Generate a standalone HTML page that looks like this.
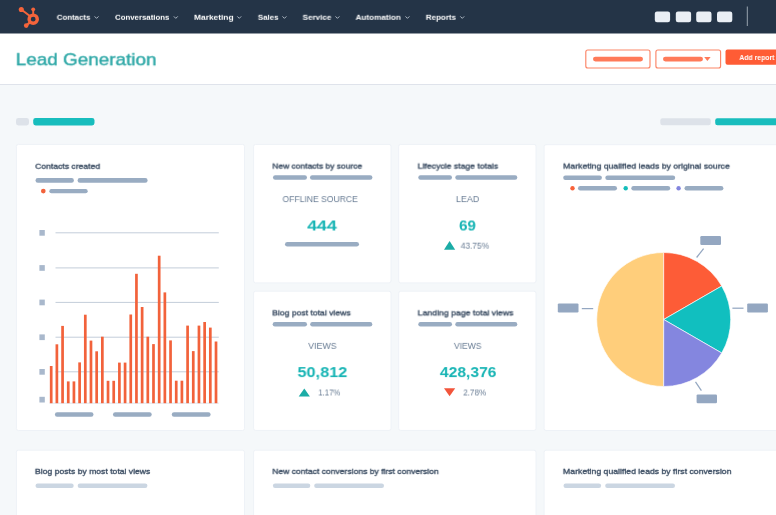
<!DOCTYPE html>
<html lang="en"><head><meta charset="utf-8"><title>Lead Generation</title>
<style>
html,body{margin:0;padding:0}
body{width:776px;height:515px;overflow:hidden;position:relative;background:#f5f8fa;font-family:"Liberation Sans",Arial,sans-serif}
.c{position:absolute;box-sizing:border-box;background:#fff;border:1px solid #eef2f7;border-radius:2px}
.t{position:absolute;left:0;white-space:nowrap;margin:0;padding:0;transform-origin:0 50%;will-change:transform}
#g{position:absolute;left:0;top:0}
</style></head><body>
<div style="position:absolute;left:0;top:0;width:776px;height:33px;background:#243447"></div>
<div style="position:absolute;left:0;top:33px;width:776px;height:51px;background:#fff;border-bottom:1px solid #dfe3eb"></div>
<svg id="g" width="776" height="515" viewBox="0 0 776 515">
<g fill="#f4643b" stroke="#f4643b" stroke-linecap="round">
<circle cx="21.3" cy="9.45" r="2.55" stroke="none"/>
<line x1="21.3" y1="9.45" x2="29.5" y2="15.7" stroke-width="2"/>
<circle cx="33.2" cy="9.3" r="1.9" stroke="none"/>
<line x1="33.2" y1="9.3" x2="33.2" y2="14" stroke-width="1.9"/>
<circle cx="33.2" cy="19.2" r="4.1" fill="none" stroke-width="3.4"/>
<circle cx="26.2" cy="25.6" r="2.3" stroke="none"/>
<line x1="26.2" y1="25.6" x2="29.6" y2="22.6" stroke-width="2.3"/>
</g>
<path d="M94.60 16.4 l1.95 1.95 l1.95 -1.95" fill="none" stroke="#bcc6d1" stroke-width="0.9"/>
<path d="M173.85 16.4 l1.95 1.95 l1.95 -1.95" fill="none" stroke="#bcc6d1" stroke-width="0.9"/>
<path d="M237.30 16.4 l1.95 1.95 l1.95 -1.95" fill="none" stroke="#bcc6d1" stroke-width="0.9"/>
<path d="M282.50 16.4 l1.95 1.95 l1.95 -1.95" fill="none" stroke="#bcc6d1" stroke-width="0.9"/>
<path d="M335.50 16.4 l1.95 1.95 l1.95 -1.95" fill="none" stroke="#bcc6d1" stroke-width="0.9"/>
<path d="M405.50 16.4 l1.95 1.95 l1.95 -1.95" fill="none" stroke="#bcc6d1" stroke-width="0.9"/>
<path d="M460.30 16.4 l1.95 1.95 l1.95 -1.95" fill="none" stroke="#bcc6d1" stroke-width="0.9"/>
<rect x="654.80" y="11.60" width="15.30" height="10.60" rx="2.20" fill="#eaeff5"/>
<rect x="675.80" y="11.60" width="15.30" height="10.60" rx="2.20" fill="#eaeff5"/>
<rect x="696.20" y="11.60" width="15.30" height="10.60" rx="2.20" fill="#eaeff5"/>
<rect x="717.00" y="11.60" width="15.30" height="10.60" rx="2.20" fill="#eaeff5"/>
<rect x="746.80" y="6.50" width="1.00" height="19.50" rx="0.00" fill="#98a3af"/>
<rect x="0.00" y="33.00" width="776.00" height="0.50" rx="0.00" fill="#243447"/>
<rect x="585.80" y="50.00" width="64.20" height="18.00" rx="2" fill="#fff" stroke="#fb8567" stroke-width="1.15"/>
<rect x="593.00" y="56.70" width="50.00" height="4.80" rx="2.40" fill="#ff7a59"/>
<rect x="655.90" y="50.00" width="64.70" height="18.00" rx="2" fill="#fff" stroke="#fb8567" stroke-width="1.15"/>
<rect x="663.00" y="56.70" width="40.00" height="4.80" rx="2.40" fill="#ff7a59"/>
<path d="M704.2 57.1 h6.4 l-3.2 3.8 Z" fill="#ff7a59"/>
<rect x="725.50" y="49.50" width="60.00" height="15.20" rx="2.00" fill="#ff5c35"/>
<rect x="16.00" y="118.00" width="13.00" height="7.50" rx="2.40" fill="#dde2e9"/>
<rect x="33.20" y="118.00" width="61.30" height="7.50" rx="2.40" fill="#18bdbd"/>
<rect x="660.30" y="118.30" width="50.50" height="7.00" rx="2.20" fill="#dde2e9"/>
<rect x="715.20" y="118.30" width="70.00" height="7.00" rx="2.20" fill="#18bdbd"/>
<rect x="16.40" y="144.40" width="228.10" height="286.10" rx="2" fill="#fff" stroke="#eef2f7" stroke-width="1"/>
<rect x="35.50" y="178.10" width="38.40" height="4.60" rx="2.30" fill="#99acc2"/>
<rect x="77.60" y="178.10" width="70.00" height="4.60" rx="2.30" fill="#99acc2"/>
<circle cx="43.3" cy="191.1" r="2.35" fill="#f2623b"/>
<rect x="49.30" y="189.00" width="38.40" height="4.30" rx="2.15" fill="#99acc2"/>
<rect x="39.40" y="230.00" width="5.40" height="5.70" rx="0.00" fill="#a9b8cc"/>
<rect x="55.50" y="232.30" width="163.30" height="1.00" rx="0.00" fill="#c4ceda"/>
<rect x="39.40" y="265.10" width="5.40" height="5.70" rx="0.00" fill="#a9b8cc"/>
<rect x="55.50" y="267.40" width="163.30" height="1.00" rx="0.00" fill="#c4ceda"/>
<rect x="39.40" y="299.60" width="5.40" height="5.70" rx="0.00" fill="#a9b8cc"/>
<rect x="55.50" y="301.90" width="163.30" height="1.00" rx="0.00" fill="#c4ceda"/>
<rect x="39.40" y="334.40" width="5.40" height="5.70" rx="0.00" fill="#a9b8cc"/>
<rect x="55.50" y="336.70" width="163.30" height="1.00" rx="0.00" fill="#c4ceda"/>
<rect x="39.40" y="369.00" width="5.40" height="5.70" rx="0.00" fill="#a9b8cc"/>
<rect x="55.50" y="371.30" width="163.30" height="1.00" rx="0.00" fill="#c4ceda"/>
<rect x="39.40" y="396.80" width="5.40" height="5.70" rx="0.00" fill="#a9b8cc"/>
<rect x="49.50" y="402.70" width="169.30" height="0.90" rx="0.00" fill="#dbe2ea"/>
<rect x="49.85" y="366.00" width="2.7" height="37.20" fill="#f2623b"/>
<rect x="55.53" y="344.30" width="2.7" height="58.90" fill="#f2623b"/>
<rect x="61.22" y="325.90" width="2.7" height="77.30" fill="#f2623b"/>
<rect x="66.90" y="381.40" width="2.7" height="21.80" fill="#f2623b"/>
<rect x="72.58" y="381.40" width="2.7" height="21.80" fill="#f2623b"/>
<rect x="78.27" y="362.40" width="2.7" height="40.80" fill="#f2623b"/>
<rect x="83.95" y="314.70" width="2.7" height="88.50" fill="#f2623b"/>
<rect x="89.63" y="340.60" width="2.7" height="62.60" fill="#f2623b"/>
<rect x="95.31" y="351.30" width="2.7" height="51.90" fill="#f2623b"/>
<rect x="101.00" y="336.70" width="2.7" height="66.50" fill="#f2623b"/>
<rect x="106.68" y="380.80" width="2.7" height="22.40" fill="#f2623b"/>
<rect x="112.36" y="380.80" width="2.7" height="22.40" fill="#f2623b"/>
<rect x="118.05" y="362.60" width="2.7" height="40.60" fill="#f2623b"/>
<rect x="123.73" y="362.60" width="2.7" height="40.60" fill="#f2623b"/>
<rect x="129.41" y="314.50" width="2.7" height="88.70" fill="#f2623b"/>
<rect x="135.09" y="273.80" width="2.7" height="129.40" fill="#f2623b"/>
<rect x="140.78" y="307.00" width="2.7" height="96.20" fill="#f2623b"/>
<rect x="146.46" y="336.70" width="2.7" height="66.50" fill="#f2623b"/>
<rect x="152.14" y="344.10" width="2.7" height="59.10" fill="#f2623b"/>
<rect x="157.83" y="255.70" width="2.7" height="147.50" fill="#f2623b"/>
<rect x="163.51" y="292.40" width="2.7" height="110.80" fill="#f2623b"/>
<rect x="169.19" y="340.40" width="2.7" height="62.80" fill="#f2623b"/>
<rect x="174.88" y="380.70" width="2.7" height="22.50" fill="#f2623b"/>
<rect x="180.56" y="380.70" width="2.7" height="22.50" fill="#f2623b"/>
<rect x="186.24" y="325.60" width="2.7" height="77.60" fill="#f2623b"/>
<rect x="191.92" y="351.10" width="2.7" height="52.10" fill="#f2623b"/>
<rect x="197.61" y="325.60" width="2.7" height="77.60" fill="#f2623b"/>
<rect x="203.29" y="322.00" width="2.7" height="81.20" fill="#f2623b"/>
<rect x="208.97" y="327.60" width="2.7" height="75.60" fill="#f2623b"/>
<rect x="214.66" y="341.50" width="2.7" height="61.70" fill="#f2623b"/>
<rect x="54.90" y="412.30" width="38.60" height="4.40" rx="2.20" fill="#99acc2"/>
<rect x="113.00" y="412.30" width="38.70" height="4.40" rx="2.20" fill="#99acc2"/>
<rect x="171.80" y="412.30" width="38.80" height="4.40" rx="2.20" fill="#99acc2"/>
<rect x="253.60" y="144.40" width="137.40" height="138.50" rx="2" fill="#fff" stroke="#eef2f7" stroke-width="1"/>
<rect x="273.00" y="175.30" width="34.00" height="4.40" rx="2.20" fill="#99acc2"/>
<rect x="310.00" y="175.30" width="62.40" height="4.40" rx="2.20" fill="#99acc2"/>
<rect x="285.00" y="241.90" width="74.00" height="4.70" rx="2.35" fill="#99acc2"/>
<rect x="398.70" y="144.40" width="137.30" height="138.50" rx="2" fill="#fff" stroke="#eef2f7" stroke-width="1"/>
<rect x="418.30" y="175.30" width="33.70" height="4.40" rx="2.20" fill="#99acc2"/>
<rect x="455.30" y="175.30" width="62.00" height="4.40" rx="2.20" fill="#99acc2"/>
<path d="M449.60 240.90 l5.6 8.8 h-11.2 Z" fill="#1baca6"/>
<rect x="253.60" y="291.20" width="137.40" height="139.20" rx="2" fill="#fff" stroke="#eef2f7" stroke-width="1"/>
<rect x="272.70" y="322.10" width="34.30" height="4.40" rx="2.20" fill="#99acc2"/>
<rect x="310.20" y="322.10" width="62.10" height="4.40" rx="2.20" fill="#99acc2"/>
<path d="M304.30 388.50 l5.6 8.0 h-11.2 Z" fill="#1baca6"/>
<rect x="398.70" y="291.20" width="137.30" height="139.20" rx="2" fill="#fff" stroke="#eef2f7" stroke-width="1"/>
<rect x="418.30" y="322.10" width="33.70" height="4.40" rx="2.20" fill="#99acc2"/>
<rect x="455.30" y="322.10" width="62.00" height="4.40" rx="2.20" fill="#99acc2"/>
<path d="M444.00 388.20 h11.2 l-5.6 8.0 Z" fill="#f2553b"/>
<rect x="544.10" y="144.70" width="245.80" height="285.80" rx="2" fill="#fff" stroke="#eef2f7" stroke-width="1"/>
<rect x="563.20" y="175.60" width="38.70" height="4.50" rx="2.25" fill="#99acc2"/>
<rect x="605.30" y="175.60" width="69.90" height="4.50" rx="2.25" fill="#99acc2"/>
<circle cx="572.5" cy="188.2" r="2.2" fill="#f8623a"/>
<rect x="578.00" y="186.00" width="39.00" height="4.50" rx="2.25" fill="#99acc2"/>
<circle cx="625.7" cy="188.2" r="2.2" fill="#14bdba"/>
<rect x="631.30" y="186.00" width="38.90" height="4.50" rx="2.25" fill="#99acc2"/>
<circle cx="678.6" cy="188.2" r="2.2" fill="#8385de"/>
<rect x="684.50" y="186.00" width="38.90" height="4.50" rx="2.25" fill="#99acc2"/>
<path d="M663.7 252.5 A67.0 67.0 0 0 0 663.7 386.5 Z" fill="#ffce7b" stroke="#fff" stroke-width="0.65"/>
<path d="M663.7 319.5 L663.70 252.50 A67.0 67.0 0 0 1 721.72 286.00 Z" fill="#fd5c37" stroke="#fff" stroke-width="0.65" stroke-linejoin="round"/>
<path d="M663.7 319.5 L721.72 286.00 A67.0 67.0 0 0 1 721.72 353.00 Z" fill="#11bfbf" stroke="#fff" stroke-width="0.65" stroke-linejoin="round"/>
<path d="M663.7 319.5 L721.72 353.00 A67.0 67.0 0 0 1 663.70 386.50 Z" fill="#8486df" stroke="#fff" stroke-width="0.65" stroke-linejoin="round"/>
<line x1="696.6" y1="257.5" x2="703.6" y2="248.6" stroke="#94a7c1" stroke-width="1.25"/>
<line x1="732.4" y1="308.2" x2="743.5" y2="308.2" stroke="#94a7c1" stroke-width="1.25"/>
<line x1="581.8" y1="308.6" x2="593.2" y2="308.6" stroke="#94a7c1" stroke-width="1.25"/>
<line x1="695.5" y1="381.9" x2="701.4" y2="390.7" stroke="#94a7c1" stroke-width="1.25"/>
<rect x="700.30" y="236.10" width="20.70" height="8.80" rx="1.20" fill="#94a7c1"/>
<rect x="747.20" y="303.40" width="20.70" height="9.00" rx="1.20" fill="#94a7c1"/>
<rect x="557.80" y="303.40" width="20.70" height="9.00" rx="1.20" fill="#94a7c1"/>
<rect x="696.60" y="394.40" width="20.40" height="8.90" rx="1.20" fill="#94a7c1"/>
<rect x="16.40" y="450.20" width="228.10" height="79.70" rx="2" fill="#fff" stroke="#eef2f7" stroke-width="1"/>
<rect x="35.50" y="483.60" width="38.20" height="4.40" rx="2.20" fill="#cbd6e2"/>
<rect x="77.70" y="483.60" width="69.70" height="4.40" rx="2.20" fill="#cbd6e2"/>
<rect x="253.60" y="450.20" width="282.40" height="79.70" rx="2" fill="#fff" stroke="#eef2f7" stroke-width="1"/>
<rect x="272.90" y="483.60" width="37.40" height="4.40" rx="2.20" fill="#cbd6e2"/>
<rect x="314.20" y="483.60" width="69.80" height="4.40" rx="2.20" fill="#cbd6e2"/>
<rect x="544.10" y="450.20" width="245.80" height="79.70" rx="2" fill="#fff" stroke="#eef2f7" stroke-width="1"/>
<rect x="563.50" y="483.60" width="37.60" height="4.40" rx="2.20" fill="#cbd6e2"/>
<rect x="605.20" y="483.60" width="69.80" height="4.40" rx="2.20" fill="#cbd6e2"/>
</svg>
<span id="nav0" class="t" style="top:13.99px;font-size:7.8px;line-height:7.8px;color:#ffffff;font-weight:700;transform:translate(56.75px,-0.20px) rotate(0.02deg) scaleX(1.0047);">Contacts</span>
<span id="nav1" class="t" style="top:13.99px;font-size:7.8px;line-height:7.8px;color:#ffffff;font-weight:700;transform:translate(115.00px,-0.20px) rotate(0.02deg) scaleX(1.0049);">Conversations</span>
<span id="nav2" class="t" style="top:14.00px;font-size:7.8px;line-height:7.8px;color:#ffffff;font-weight:700;transform:translate(194.05px,-0.20px) rotate(0.02deg) scaleX(1.0741);">Marketing</span>
<span id="nav3" class="t" style="top:13.99px;font-size:7.8px;line-height:7.8px;color:#ffffff;font-weight:700;transform:translate(257.90px,-0.20px) rotate(0.02deg) scaleX(1.0086);">Sales</span>
<span id="nav4" class="t" style="top:13.99px;font-size:7.8px;line-height:7.8px;color:#ffffff;font-weight:700;transform:translate(302.60px,-0.20px) rotate(0.02deg) scaleX(1.0359);">Service</span>
<span id="nav5" class="t" style="top:13.99px;font-size:7.8px;line-height:7.8px;color:#ffffff;font-weight:700;transform:translate(355.60px,-0.20px) rotate(0.02deg) scaleX(1.0430);">Automation</span>
<span id="nav6" class="t" style="top:13.99px;font-size:7.8px;line-height:7.8px;color:#ffffff;font-weight:700;transform:translate(425.80px,-0.20px) rotate(0.02deg) scaleX(1.0206);">Reports</span>
<span id="title" class="t" style="top:50.96px;font-size:17.0px;line-height:17.0px;color:#2fa8a7;font-weight:400;transform:translate(15.75px,0.20px) rotate(0.02deg) scaleX(1.1110);-webkit-text-stroke:0.4px #2fa8a7;">Lead Generation</span>
<span id="addr" class="t" style="top:53.99px;font-size:7.4px;line-height:7.4px;color:#ffffff;font-weight:700;transform:translate(739.40px,0.00px) rotate(0.02deg) scaleX(0.9266);">Add report</span>
<span id="c1" class="t" style="top:162.99px;font-size:8.0px;line-height:8.0px;color:#394b61;font-weight:400;transform:translate(35.25px,-0.20px) rotate(0.02deg) scaleX(1.0741);-webkit-text-stroke:0.33px #394b61;">Contacts created</span>
<span id="k1t" class="t" style="top:162.98px;font-size:8.0px;line-height:8.0px;color:#394b61;font-weight:400;transform:translate(272.35px,-0.40px) rotate(0.02deg) scaleX(1.0595);-webkit-text-stroke:0.33px #394b61;">New contacts by source</span>
<span id="k1l" class="t" style="top:194.98px;font-size:9.0px;line-height:9.0px;color:#677b93;font-weight:400;transform:translate(282.50px,0.10px) rotate(0.02deg) scaleX(0.9535);">OFFLINE SOURCE</span>
<span id="k1n" class="t" style="top:218.00px;font-size:15.4px;line-height:15.4px;color:#16b4b4;font-weight:700;transform:translate(307.25px,-0.50px) rotate(0.02deg) scaleX(1.1510);">444</span>
<span id="k2t" class="t" style="top:162.98px;font-size:8.0px;line-height:8.0px;color:#394b61;font-weight:400;transform:translate(417.70px,-0.40px) rotate(0.02deg) scaleX(1.0826);-webkit-text-stroke:0.33px #394b61;">Lifecycle stage totals</span>
<span id="k2l" class="t" style="top:194.99px;font-size:9.0px;line-height:9.0px;color:#677b93;font-weight:400;transform:translate(455.95px,0.10px) rotate(0.02deg) scaleX(0.9930);">LEAD</span>
<span id="k2n" class="t" style="top:217.99px;font-size:15.4px;line-height:15.4px;color:#16b4b4;font-weight:700;transform:translate(459.05px,-0.50px) rotate(0.02deg) scaleX(0.9867);">69</span>
<span id="k2d" class="t" style="top:243.00px;font-size:8.2px;line-height:8.2px;color:#677b93;font-weight:400;transform:translate(460.70px,-0.30px) rotate(0.02deg) scaleX(1.0193);">43.75%</span>
<span id="k3t" class="t" style="top:308.98px;font-size:8.0px;line-height:8.0px;color:#394b61;font-weight:400;transform:translate(272.30px,0.40px) rotate(0.02deg) scaleX(1.0745);-webkit-text-stroke:0.33px #394b61;">Blog post total views</span>
<span id="k3l" class="t" style="top:342.00px;font-size:9.0px;line-height:9.0px;color:#677b93;font-weight:400;transform:translate(308.25px,-0.10px) rotate(0.02deg) scaleX(0.9772);">VIEWS</span>
<span id="k3n" class="t" style="top:363.98px;font-size:15.4px;line-height:15.4px;color:#16b4b4;font-weight:700;transform:translate(297.50px,0.10px) rotate(0.02deg) scaleX(1.0575);">50,812</span>
<span id="k3d" class="t" style="top:389.99px;font-size:8.2px;line-height:8.2px;color:#677b93;font-weight:400;transform:translate(318.35px,-0.50px) rotate(0.02deg) scaleX(0.9436);">1.17%</span>
<span id="k4t" class="t" style="top:308.96px;font-size:8.0px;line-height:8.0px;color:#394b61;font-weight:400;transform:translate(417.70px,0.40px) rotate(0.02deg) scaleX(1.0871);-webkit-text-stroke:0.33px #394b61;">Landing page total views</span>
<span id="k4l" class="t" style="top:341.99px;font-size:9.0px;line-height:9.0px;color:#677b93;font-weight:400;transform:translate(453.90px,-0.10px) rotate(0.02deg) scaleX(0.9505);">VIEWS</span>
<span id="k4n" class="t" style="top:363.99px;font-size:15.4px;line-height:15.4px;color:#16b4b4;font-weight:700;transform:translate(439.90px,0.10px) rotate(0.02deg) scaleX(1.0166);">428,376</span>
<span id="k4d" class="t" style="top:389.99px;font-size:8.2px;line-height:8.2px;color:#677b93;font-weight:400;transform:translate(463.30px,-0.50px) rotate(0.02deg) scaleX(0.9849);">2.78%</span>
<span id="p1" class="t" style="top:162.95px;font-size:8.0px;line-height:8.0px;color:#394b61;font-weight:400;transform:translate(563.20px,-0.40px) rotate(0.02deg) scaleX(1.0865);-webkit-text-stroke:0.33px #394b61;">Marketing qualified leads by original source</span>
<span id="b1" class="t" style="top:467.97px;font-size:8.0px;line-height:8.0px;color:#394b61;font-weight:400;transform:translate(35.00px,-0.10px) rotate(0.02deg) scaleX(1.0761);-webkit-text-stroke:0.33px #394b61;">Blog posts by most total views</span>
<span id="b2" class="t" style="top:467.96px;font-size:8.0px;line-height:8.0px;color:#394b61;font-weight:400;transform:translate(272.35px,-0.10px) rotate(0.02deg) scaleX(1.0694);-webkit-text-stroke:0.33px #394b61;">New contact conversions by first conversion</span>
<span id="b3" class="t" style="top:467.96px;font-size:8.0px;line-height:8.0px;color:#394b61;font-weight:400;transform:translate(563.00px,-0.10px) rotate(0.02deg) scaleX(1.0853);-webkit-text-stroke:0.33px #394b61;">Marketing qualified leads by first conversion</span>
</body></html>
